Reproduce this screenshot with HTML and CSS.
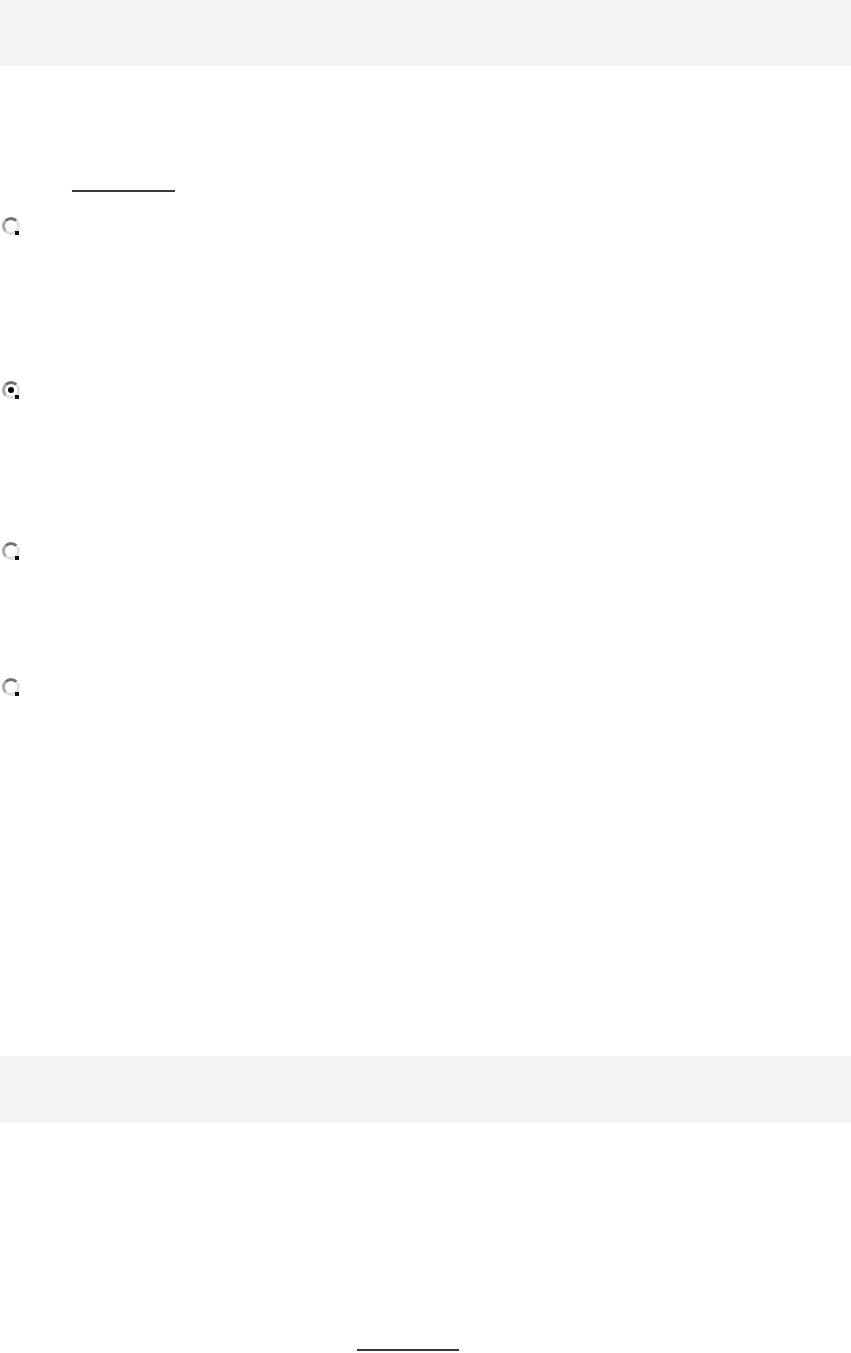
FILE: index.html
```html
<!DOCTYPE html>
<html lang="en">
<head>
<meta charset="utf-8">
<title>Form</title>
<link rel="stylesheet" href="styles.css">
</head>
<body>
<div class="page">
  <header class="band band-top"></header>
  <section class="form">
    <div class="tab-line tab-line-first"></div>
    <div class="options">
      <label class="option opt-1"><span class="radio"></span></label>
      <label class="option opt-2"><span class="radio checked"></span></label>
      <label class="option opt-3"><span class="radio"></span></label>
      <label class="option opt-4"><span class="radio"></span></label>
    </div>
  </section>
  <div class="band band-bottom"></div>
  <footer class="foot">
    <div class="tab-line tab-line-second"></div>
  </footer>
</div>
</body>
</html>
```
FILE: styles.css
```css
html, body {
  margin: 0;
  padding: 0;
  background: #ffffff;
  font-family: "Liberation Sans", Arial, sans-serif;
}
.page {
  width: 851px;
  display: flex;
  flex-direction: column;
}
.band {
  background: #f4f4f4;
  width: 100%;
}
.band-top {
  height: 66px;
}
.form {
  display: flex;
  flex-direction: column;
}
.tab-line {
  height: 2px;
  background: #2f3b47;
}
.tab-line-first {
  margin-top: 124px;
  margin-left: 72px;
  width: 103px;
}
.options {
  display: flex;
  flex-direction: column;
}
.option {
  display: flex;
  align-items: center;
  padding-left: 2px;
}
.opt-1 { margin-top: 25px; }
.opt-2 { margin-top: 146px; }
.opt-3 { margin-top: 143px; }
.opt-4 { margin-top: 118px; }
.radio {
  position: relative;
  box-sizing: border-box;
  width: 18px;
  height: 18px;
  border-radius: 50%;
  border: 3px solid;
  border-color: #6f6f6f #e2e2e2 #dcdcdc #a8a8a8;
  background: #ffffff;
}
.radio::after {
  content: "";
  position: absolute;
  right: -2px;
  bottom: -3px;
  width: 4px;
  height: 4px;
  background: #111;
}
.radio.checked::before {
  content: "";
  position: absolute;
  left: 3px;
  top: 3px;
  width: 6px;
  height: 6px;
  border-radius: 50%;
  background: #000;
}
.band-bottom {
  margin-top: 360px;
  height: 67px;
}
.foot {
  display: flex;
}
.tab-line-second {
  margin-top: 226px;
  margin-left: 357px;
  width: 102px;
}
```
